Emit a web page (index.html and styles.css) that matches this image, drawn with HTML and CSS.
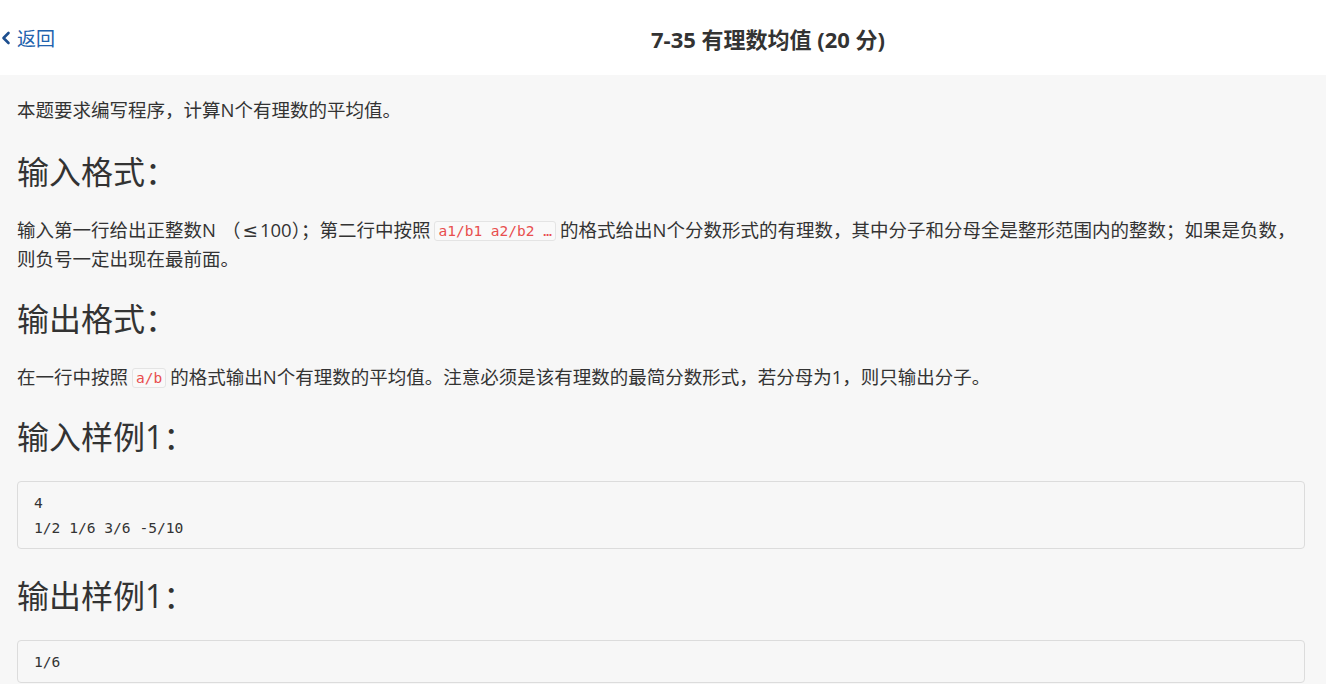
FILE: index.html
```html
<!DOCTYPE html>
<html lang="zh-CN">
<head>
<meta charset="utf-8">
<title>7-35 有理数均值</title>
<link rel="stylesheet" href="styles.css">
</head>
<body>
<div class="page">
  <header class="topbar">
    <a class="back" href="#">
      <svg class="chev" width="10" height="14" viewBox="0 0 10 14"><polyline points="7.5,2 2.5,7 7.5,12" fill="none" stroke="#1d4f8f" stroke-width="2.6" stroke-linecap="round" stroke-linejoin="round"/></svg>
      <span>返回</span>
    </a>
    <h1 class="title">7-35 有理数均值 (20 分)</h1>
  </header>
  <main class="content">
    <p class="intro">本题要求编写程序，计算N个有理数的平均值。</p>
    <h2>输入格式：</h2>
    <p>输入第一行给出正整数N<span class="paren">（<span class="le">≤</span>100）；</span>第二行中按照<code>a1/b1 a2/b2 …</code>的格式给出N个分数形式的有理数，其中分子和分母全是整形范围内的整数；如果是负数，则负号一定出现在最前面。</p>
    <h2>输出格式：</h2>
    <p>在一行中按照<code>a/b</code>的格式输出N个有理数的平均值。注意必须是该有理数的最简分数形式，若分母为1，则只输出分子。</p>
    <h2>输入样例1：</h2>
    <pre>4
1/2 1/6 3/6 -5/10</pre>
    <h2>输出样例1：</h2>
    <pre>1/6</pre>
  </main>
</div>
</body>
</html>
```
FILE: styles.css
```css
html, body {
  margin: 0;
  padding: 0;
  background: #ffffff;
}
body {
  font-family: "Open Sans", "Noto Sans CJK SC", sans-serif;
  color: #333333;
  overflow: hidden;
}
.page {
  margin-right: 5px;
}
.topbar {
  height: 75px;
  background: #ffffff;
  display: flex;
  align-items: center;
}
.back {
  width: 210px;
  display: flex;
  align-items: center;
  gap: 6px;
  padding-left: 1px;
  color: #2162ad;
  text-decoration: none;
  font-size: 19px;
  font-family: "Noto Sans CJK SC", sans-serif;
  box-sizing: border-box;
}
.chev {
  display: block;
}
.title {
  flex: 1;
  margin: 0;
  text-align: center;
  font-size: 22px;
  font-weight: 700;
  color: #333333;
}
.content {
  background: #f7f7f7;
  padding: 21px 21px 20px 17px;
}
p {
  margin: 0 0 27px;
  font-size: 18.5px;
  line-height: 28px;
}
.intro {
  margin-bottom: 29px;
}
.paren {
  margin-left: 6px;
}
.le {
  display: inline-block;
  margin: 0 2px;
  font-family: "DejaVu Sans", sans-serif;
}
h2 {
  margin: 0 0 25px;
  font-size: 32px;
  line-height: 38px;
  font-weight: 400;
  color: #333333;
}
code {
  font-family: "DejaVu Sans Mono", monospace;
  font-size: 14.5px;
  line-height: 18px;
  display: inline-block;
  vertical-align: 1px;
  color: #e84e4e;
  background: #f9f9f9;
  border: 1px solid #e4e4e4;
  border-radius: 3px;
  padding: 0 3px;
  margin: 0 4px;
}
pre {
  margin: 0 0 28px;
  padding: 8px 16px;
  font-family: "DejaVu Sans Mono", monospace;
  font-size: 14.6px;
  line-height: 25px;
  color: #333333;
  background: #f7f7f7;
  border: 1px solid #dcdcdc;
  border-radius: 4px;
}
```
